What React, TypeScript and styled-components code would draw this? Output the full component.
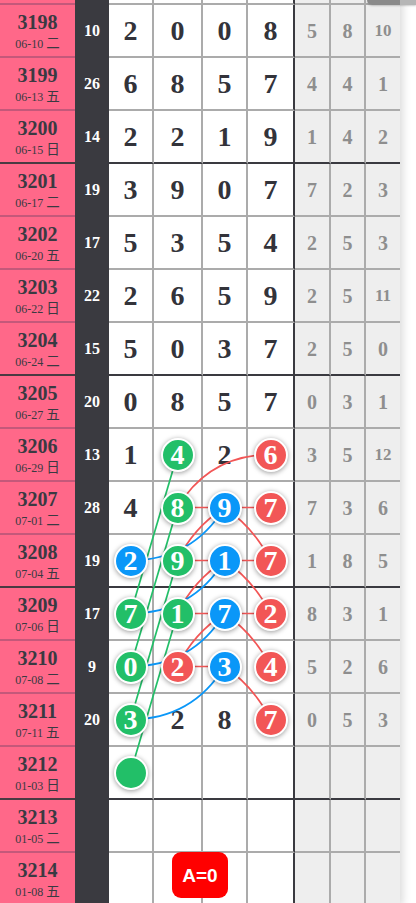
import React from 'react';
import styled, { createGlobalStyle } from 'styled-components';

const GlobalStyle = createGlobalStyle`
  html, body { margin: 0; padding: 0; background: #fff; }
  body { font-family: "Liberation Serif", "Noto Sans CJK SC", serif; overflow: hidden; }
  * { box-sizing: border-box; }
`;

const COLS = '75px 34px 45px 49px 45px 47px 36px 35px 34px';
const ROW_H = 53;
const STRIP_H = 5;
const THIN = '#ababab';
const DARK = '#3a3a40';
const PINK = '#ff6889';
const PINK_LINE = '#c4587a';

const GREEN = '#22bf68';
const BLUE = '#0a97f8';
const RED = '#f25656';

type Cell = string;
interface RowData {
  no: string;
  date: string;
  sum: string;
  digits: Cell[];
  miss: string[];
}

const rows: RowData[] = [
  { no: '3198', date: '06-10', sum: '10', digits: ['2', '0', '0', '8'], miss: ['5', '8', '10'] },
  { no: '3199', date: '06-13', sum: '26', digits: ['6', '8', '5', '7'], miss: ['4', '4', '1'] },
  { no: '3200', date: '06-15', sum: '14', digits: ['2', '2', '1', '9'], miss: ['1', '4', '2'] },
  { no: '3201', date: '06-17', sum: '19', digits: ['3', '9', '0', '7'], miss: ['7', '2', '3'] },
  { no: '3202', date: '06-20', sum: '17', digits: ['5', '3', '5', '4'], miss: ['2', '5', '3'] },
  { no: '3203', date: '06-22', sum: '22', digits: ['2', '6', '5', '9'], miss: ['2', '5', '11'] },
  { no: '3204', date: '06-24', sum: '15', digits: ['5', '0', '3', '7'], miss: ['2', '5', '0'] },
  { no: '3205', date: '06-27', sum: '20', digits: ['0', '8', '5', '7'], miss: ['0', '3', '1'] },
  { no: '3206', date: '06-29', sum: '13', digits: ['1', 'g4', '2', 'r6'], miss: ['3', '5', '12'] },
  { no: '3207', date: '07-01', sum: '28', digits: ['4', 'g8', 'b9', 'r7'], miss: ['7', '3', '6'] },
  { no: '3208', date: '07-04', sum: '19', digits: ['b2', 'g9', 'b1', 'r7'], miss: ['1', '8', '5'] },
  { no: '3209', date: '07-06', sum: '17', digits: ['g7', 'g1', 'b7', 'r2'], miss: ['8', '3', '1'] },
  { no: '3210', date: '07-08', sum: '9', digits: ['g0', 'r2', 'b3', 'r4'], miss: ['5', '2', '6'] },
  { no: '3211', date: '07-11', sum: '20', digits: ['g3', '2', '8', 'r7'], miss: ['0', '5', '3'] },
  { no: '3212', date: '01-03', sum: '', digits: ['g', '', '', ''], miss: ['', '', ''] },
  { no: '3213', date: '01-05', sum: '', digits: ['', '', '', ''], miss: ['', '', ''] },
  { no: '3214', date: '01-08', sum: '', digits: ['', '', '', ''], miss: ['', '', ''] },
];

const weekday: Record<string, string> = {
  '06-10': '二', '06-13': '五', '06-15': '日', '06-17': '二', '06-20': '五', '06-22': '日',
  '06-24': '二', '06-27': '五', '06-29': '日', '07-01': '二', '07-04': '五', '07-06': '日',
  '07-08': '二', '07-11': '五', '01-03': '日', '01-05': '二', '01-08': '五',
};

const Board = styled.div`
  position: relative;
  width: 400px;
  box-shadow: 3px 0 8px rgba(0, 0, 0, 0.14);
`;

const Row = styled.div<{ $h: number }>`
  display: grid;
  grid-template-columns: ${COLS};
  height: ${(p) => p.$h}px;
`;

const IssueCell = styled.div<{ $thick: boolean }>`
  background: ${PINK};
  border-bottom: 2px solid ${(p) => (p.$thick ? '#4a3a42' : PINK_LINE)};
  display: flex;
  flex-direction: column;
  align-items: center;
  justify-content: center;
  padding-top: 3px;
  color: #3a3a42;
`;

const IssueNo = styled.div`
  font: bold 20px/21px "Liberation Serif", serif;
`;

const IssueDate = styled.div`
  font: 12px/18px "Liberation Serif", "Noto Sans CJK SC", serif;
  white-space: nowrap;
  display: flex;
  align-items: baseline;
`;

const Week = styled.span`
  font-family: "Noto Sans CJK SC", sans-serif;
  font-size: 13.5px;
  margin-left: 3px;
`;

const SumCell = styled.div`
  background: ${DARK};
  border-bottom: 2px solid ${DARK};
  display: flex;
  align-items: center;
  justify-content: center;
  color: #fff;
  font: bold 16px/1 "Liberation Serif", serif;
`;

const DigitCell = styled.div<{ $thick: boolean; $edge: boolean }>`
  background: #fff;
  border-bottom: 2px solid ${(p) => (p.$thick ? DARK : THIN)};
  border-right: 2px solid ${(p) => (p.$edge ? DARK : THIN)};
  display: flex;
  align-items: center;
  justify-content: center;
  color: #33333a;
  font: bold 28px/1 "Liberation Serif", serif;
`;

const MissCell = styled.div<{ $thick: boolean; $last: boolean; $small: boolean }>`
  background: #eeeeee;
  border-bottom: 2px solid ${(p) => (p.$thick ? DARK : THIN)};
  border-right: ${(p) => (p.$last ? 'none' : `2px solid ${THIN}`)};
  display: flex;
  align-items: center;
  justify-content: center;
  color: #8e8e8e;
  font: bold ${(p) => (p.$small ? 17 : 20)}px/1 "Liberation Serif", serif;
`;

const Ball = styled.div<{ $c: string }>`
  position: relative;
  z-index: 2;
  width: 34px;
  height: 34px;
  border-radius: 50%;
  border: 2px solid #fff;
  background: ${(p) => p.$c};
  box-shadow: 0 1px 5px rgba(0, 0, 0, 0.4);
  display: flex;
  align-items: center;
  justify-content: center;
  color: #fff;
  font: bold 28px/1 "Liberation Serif", serif;
`;

const Lines = styled.svg`
  position: absolute;
  top: 0;
  left: 0;
  z-index: 1;
  pointer-events: none;
`;

const TopTab = styled.div`
  position: fixed;
  top: 0;
  right: 0;
  width: 49px;
  height: 5px;
  border-bottom-left-radius: 8px;
  background: linear-gradient(90deg, #8a8a8a 0, #8a8a8a 33px, #b6b6b6 33px);
  box-shadow: 0 1px 2px rgba(0, 0, 0, 0.2);
  z-index: 5;
`;

const Badge = styled.div`
  position: fixed;
  left: 172px;
  bottom: 5px;
  width: 56px;
  height: 46px;
  border-radius: 9px;
  background: #ff0000;
  color: #fff;
  font: bold 19px/1 "Liberation Sans", Arial, sans-serif;
  display: flex;
  align-items: center;
  justify-content: center;
  z-index: 5;
`;

const colorOf: Record<string, string> = { g: GREEN, b: BLUE, r: RED };

const X = [130.5, 177.5, 224.5, 270.5];
const Y = (no: number) => STRIP_H + (no - 3198) * ROW_H + 25.5;

const curve = (x0: number, y0: number, x1: number, y1: number, d: number) => {
  const mx = (x0 + x1) / 2;
  const my = (y0 + y1) / 2;
  const vx = x1 - x0;
  const vy = y1 - y0;
  const L = Math.hypot(vx, vy);
  const cx = mx + (d * -vy) / L;
  const cy = my + (d * vx) / L;
  return `M${x0} ${y0} Q${cx.toFixed(1)} ${cy.toFixed(1)} ${x1} ${y1}`;
};

const line = (x0: number, y0: number, x1: number, y1: number) => `M${x0} ${y0} L${x1} ${y1}`;

const greenPaths = [3206, 3207, 3208, 3209].map((r) => line(X[1], Y(r), X[0], Y(r + 3)));
const redPaths = [
  curve(X[3], Y(3206), X[1], Y(3207), 30),
  line(X[1], Y(3207), X[3], Y(3207)),
  line(X[1], Y(3208), X[3], Y(3208)),
  line(X[1], Y(3209), X[3], Y(3209)),
  line(X[1], Y(3210), X[2], Y(3210)),
  ...[3207, 3208, 3209].map((r) => curve(X[2], Y(r), X[1], Y(r + 1), 10)),
  ...[3207, 3208, 3209, 3210].map((r) => curve(X[2], Y(r), X[3], Y(r + 1), -9)),
];
const bluePaths = [3207, 3208, 3209, 3210].map((r) => curve(X[2], Y(r), X[0], Y(r + 1), -30));

const DigitContent: React.FC<{ v: string }> = ({ v }) => {
  if (!v) return null;
  const c = colorOf[v[0]];
  if (c) return <Ball $c={c}>{v.slice(1)}</Ball>;
  return <>{v}</>;
};

export default function App() {
  const height = STRIP_H + rows.length * ROW_H;
  return (
    <>
      <GlobalStyle />
      <Board>
        <Row $h={STRIP_H}>
          <IssueCell $thick={false} />
          <SumCell />
          {[0, 1, 2, 3].map((i) => (
            <DigitCell key={i} $thick={false} $edge={i === 3} />
          ))}
          {[0, 1, 2].map((i) => (
            <MissCell key={i} $thick={false} $last={i === 2} $small={false} />
          ))}
        </Row>
        {rows.map((r) => {
          const thick = Number(r.no) % 4 === 0;
          return (
            <Row key={r.no} $h={ROW_H}>
              <IssueCell $thick={thick}>
                <IssueNo>{r.no}</IssueNo>
                <IssueDate>
                  {r.date}
                  <Week>{weekday[r.date]}</Week>
                </IssueDate>
              </IssueCell>
              <SumCell>{r.sum}</SumCell>
              {r.digits.map((d, i) => (
                <DigitCell key={i} $thick={thick} $edge={i === 3}>
                  <DigitContent v={d} />
                </DigitCell>
              ))}
              {r.miss.map((m, i) => (
                <MissCell key={i} $thick={thick} $last={i === 2} $small={m.length > 1}>
                  {m}
                </MissCell>
              ))}
            </Row>
          );
        })}
        <Lines width={400} height={height} viewBox={`0 0 400 ${height}`}>
          <g fill="none" strokeWidth={1.7}>
            {greenPaths.map((d, i) => (
              <path key={`g${i}`} d={d} stroke={GREEN} />
            ))}
            {redPaths.map((d, i) => (
              <path key={`r${i}`} d={d} stroke={RED} />
            ))}
            {bluePaths.map((d, i) => (
              <path key={`b${i}`} d={d} stroke={BLUE} />
            ))}
          </g>
        </Lines>
      </Board>
      <TopTab />
      <Badge>A=0</Badge>
    </>
  );
}
